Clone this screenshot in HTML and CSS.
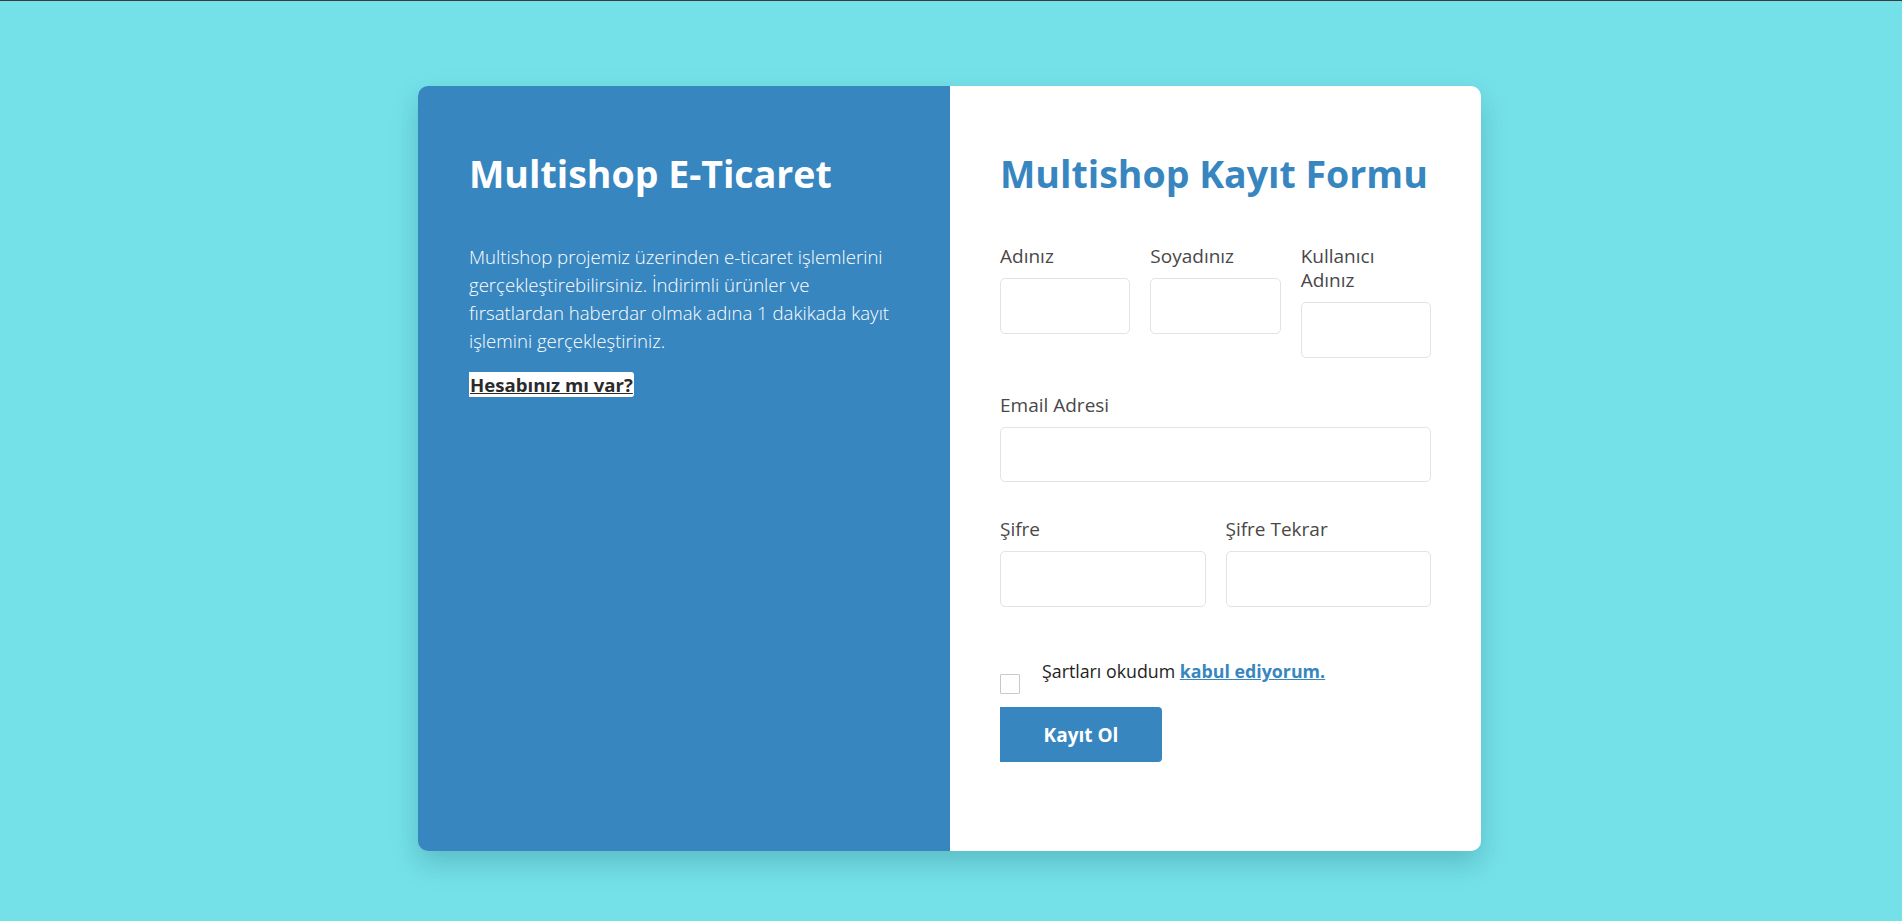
FILE: index.html
```html
<!DOCTYPE html>
<html lang="tr">
<head>
<meta charset="utf-8">
<title>Multishop Kayıt</title>
<link rel="stylesheet" href="styles.css">
</head>
<body>
<div class="page">
  <div class="card">
    <section class="info">
      <h1 class="info-title">Multishop E-Ticaret</h1>
      <p class="info-text">Multishop projemiz üzerinden e-ticaret işlemlerini gerçekleştirebilirsiniz. İndirimli ürünler ve fırsatlardan haberdar olmak adına 1 dakikada kayıt işlemini gerçekleştiriniz.</p>
      <a class="info-link" href="#">Hesabınız mı var?</a>
    </section>
    <section class="form-panel">
      <h1 class="form-title">Multishop Kayıt Formu</h1>
      <form class="form">
        <div class="row row-3">
          <div class="field">
            <label class="field-label">Adınız</label>
            <input class="field-input" type="text">
          </div>
          <div class="field">
            <label class="field-label">Soyadınız</label>
            <input class="field-input" type="text">
          </div>
          <div class="field">
            <label class="field-label">Kullanıcı Adınız</label>
            <input class="field-input" type="text">
          </div>
        </div>
        <div class="row">
          <div class="field">
            <label class="field-label">Email Adresi</label>
            <input class="field-input field-input-short" type="email">
          </div>
        </div>
        <div class="row row-2">
          <div class="field">
            <label class="field-label">Şifre</label>
            <input class="field-input" type="password">
          </div>
          <div class="field">
            <label class="field-label">Şifre Tekrar</label>
            <input class="field-input" type="password">
          </div>
        </div>
        <div class="check-row">
          <span class="check-box"></span>
          <span class="check-text">Şartları okudum <a class="check-link" href="#">kabul ediyorum.</a></span>
        </div>
        <button class="submit" type="button">Kayıt Ol</button>
      </form>
    </section>
  </div>
</div>
</body>
</html>
```

FILE: styles.css
```css
* { box-sizing: border-box; }

html, body {
  margin: 0;
  padding: 0;
}

body {
  background: #74e1e9;
  border-top: 1px solid #3c3c3c;
  font-family: "Open Sans", "Liberation Sans", sans-serif;
  min-height: 921px;
}

.page {
  padding-top: 85px;
  padding-right: 3px;
  display: flex;
  justify-content: center;
}

.card {
  width: 1063px;
  height: 765px;
  display: grid;
  grid-template-columns: 532px 531px;
  border-radius: 10px;
  overflow: hidden;
  box-shadow: 0 12px 28px rgba(0, 60, 70, 0.22);
}

.info {
  background: #3886bf;
  padding: 64px 50px 0 51px;
  color: #fff;
}

.info-title,
.form-title {
  margin: 0;
  font-size: 37.5px;
  line-height: 48px;
  font-weight: 700;
  white-space: nowrap;
}

.info-title { color: #fff; }

.info-text {
  margin: 45px 0 0;
  font-size: 18.6px;
  line-height: 28px;
  font-weight: 300;
  color: #fff;
}

.info-link {
  display: inline-block;
  margin-top: 17px;
  background: #fff;
  color: #2b2b2b;
  font-weight: 700;
  font-size: 18.6px;
  line-height: 25px;
  padding: 0 1px;
  border-radius: 0 3px 3px 0;
  text-decoration: underline;
}

.form-panel {
  background: #fff;
  padding: 64px 50px 0 50px;
  min-width: 0;
}

.form-title { color: #3886bf; }

.form {
  margin-top: 46px;
}

.row {
  display: grid;
  grid-template-columns: minmax(0, 1fr);
  gap: 20px;
  margin-bottom: 35px;
  align-items: start;
}

.row-3 { grid-template-columns: repeat(3, minmax(0, 1fr)); }
.row-2 { grid-template-columns: repeat(2, minmax(0, 1fr)); }

.field {
  display: flex;
  flex-direction: column;
  min-width: 0;
}

.field-label {
  font-size: 19px;
  line-height: 24px;
  font-weight: 500;
  color: #4a4747;
  margin-bottom: 10px;
}

.field-input {
  width: 100%;
  min-width: 0;
  height: 56px;
  border: 1px solid #e3e3e3;
  border-radius: 5px;
  background: #fff;
  font: inherit;
}

.field-input-short { height: 55px; }

.check-row {
  display: flex;
  align-items: flex-start;
  margin-top: 52px;
}

.check-box {
  width: 20px;
  height: 20px;
  border: 1px solid #c9c9c9;
  border-radius: 1px;
  margin-top: 15px;
  flex: none;
}

.check-text {
  margin-left: 22px;
  font-size: 17.8px;
  line-height: 24px;
  color: #1e1e1e;
}

.check-link {
  color: #3886bf;
  font-weight: 700;
  text-decoration: underline;
}

.submit {
  display: block;
  margin-top: 13px;
  width: 162px;
  height: 55px;
  border: 0;
  border-radius: 0 4px 4px 0;
  background: #3886bf;
  color: #fff;
  font-family: inherit;
  font-weight: 700;
  font-size: 19px;
}
```
